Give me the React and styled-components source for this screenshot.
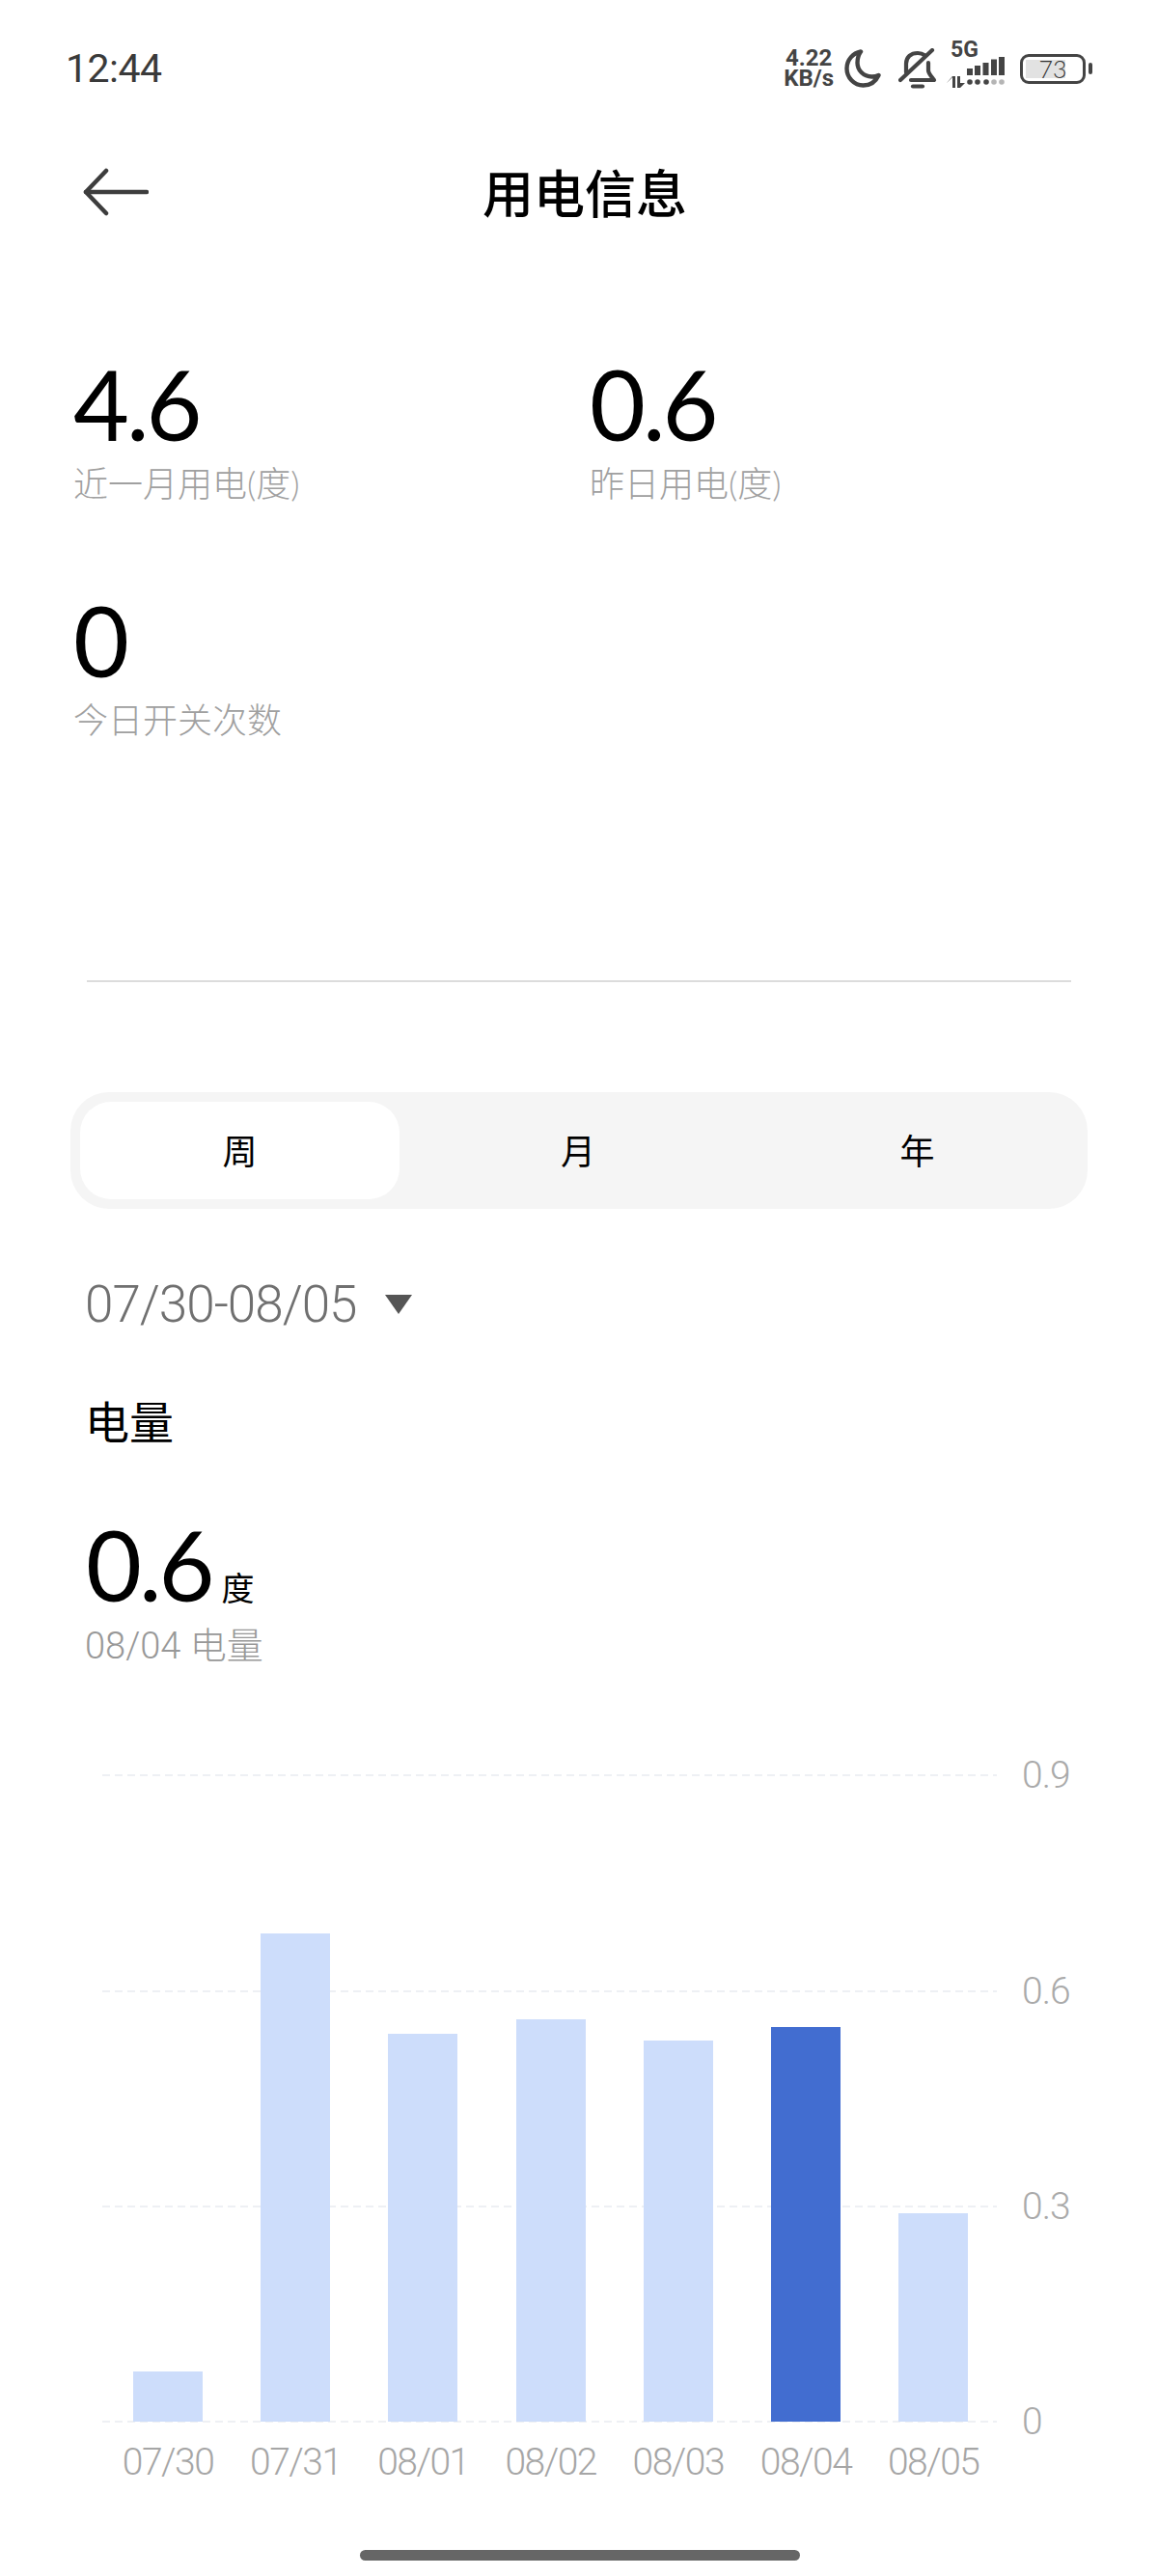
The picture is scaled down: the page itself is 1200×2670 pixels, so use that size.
import React from "react";
import styled, { createGlobalStyle } from "styled-components";

const GlobalStyle = createGlobalStyle`
  html, body {
    margin: 0;
    padding: 0;
    background: #fff;
  }
  body {
    font-family: Lato, "Noto Sans CJK SC", sans-serif;
  }
`;

//chart data, heights in px above the zero line
const bars = [
  { day: "07/30", height: 52 },
  { day: "07/31", height: 506 },
  { day: "08/01", height: 402 },
  { day: "08/02", height: 417 },
  { day: "08/03", height: 395 },
  { day: "08/04", height: 409, active: true },
  { day: "08/05", height: 216 },
];
const ticks = [
  { label: "0.9", top: 0 },
  { label: "0.6", top: 224 },
  { label: "0.3", top: 447 },
  { label: "0", top: 670 },
];

const MoonIcon = () => (
  <svg width="38" height="40" viewBox="0 0 38 40" fill="none">
    <path
      d="M17 2.500C9 4 2.500 11 2.500 20c0 9.500 7.500 17.500 17 17.500 7 0 13-4 16-10.500-2 1-4.500 1.500-7 1.500C19.500 28.500 13.500 21.500 13.500 14c0-4.500 1.300-8.500 3.500-11.500z"
      stroke="#444"
      strokeWidth="4.400"
      strokeLinejoin="round"
    />
  </svg>
);

const BellOffIcon = () => (
  <BellSvg width="40" height="42" viewBox="0 0 40 42" fill="none" stroke="#444" strokeWidth="4.200" strokeLinecap="round" strokeLinejoin="round">
    <path d="M8 25V16C8 9 13 5 20 5c3 0 5.500 1 7.500 2.500" />
    <path d="M31 15v8c0 3 3 6 6 10H13" />
    <path d="M2 33 35 2" />
    <path d="M15 39.500h10" />
  </BellSvg>
);

const SignalIcon = () => (
  <svg width="62" height="34" viewBox="0 0 62 34" fill="#444">
    <rect x="21" y="12" width="6" height="7" />
    <rect x="29" y="9" width="6" height="10" />
    <rect x="37.500" y="6" width="6" height="13" />
    <rect x="46" y="2.500" width="6" height="16.500" />
    <rect x="54" y="0" width="6" height="19" />
    <circle cx="24" cy="26" r="2.800" />
    <circle cx="32" cy="26" r="2.800" />
    <circle cx="41" cy="26" r="2.800" />
    <circle cx="49" cy="26" r="2.800" fill="#b5b5b5" />
    <circle cx="57" cy="26" r="2.800" fill="#b5b5b5" />
    <path d="M0 27l6-6v11h3V20H6zM11 20v12h3l5-5h-5v-7z" />
  </svg>
);

const BackArrow = () => (
  <svg width="68" height="50" viewBox="0 0 68 50" fill="none" stroke="#3d3d3d" strokeWidth="4.500" strokeLinecap="round" strokeLinejoin="round">
    <path d="M24 3 3 25l21 22" />
    <path d="M3 25h63" />
  </svg>
);

const App = () => {
  return (
    <Page>
      <GlobalStyle />
      <StatusBar>
        <Clock>12:44</Clock>
        <StatusIcons>
          <Speed>
            <span>4.22</span>
            <span>KB/s</span>
          </Speed>
          <MoonIcon />
          <BellOffIcon />
          <Network>
            <NetLabel>5G</NetLabel>
            <SignalIcon />
          </Network>
          <Battery>
            <BatteryFill />
            <BatteryLevel>73</BatteryLevel>
          </Battery>
        </StatusIcons>
      </StatusBar>

      <NavBar>
        <BackArrow />
        <Title>用电信息</Title>
      </NavBar>

      <Stats>
        <Stat>
          <BigNumber>4.6</BigNumber>
          <Caption>近一月用电(度)</Caption>
        </Stat>
        <Stat>
          <BigNumber>0.6</BigNumber>
          <Caption>昨日用电(度)</Caption>
        </Stat>
        <Stat>
          <BigNumber>0</BigNumber>
          <Caption>今日开关次数</Caption>
        </Stat>
      </Stats>

      <Divider />

      <Tabs>
        <Tab $active>周</Tab>
        <Tab>月</Tab>
        <Tab>年</Tab>
      </Tabs>

      <DateRow>
        <span>07/30-08/05</span>
        <Caret />
      </DateRow>

      <SectionTitle>电量</SectionTitle>

      <Reading>
        <BigNumber>0.6</BigNumber>
        <Unit>度</Unit>
      </Reading>
      <ReadingCaption>08/04 电量</ReadingCaption>

      <Chart>
        <Plot>
          {ticks.map((t) => (
            <TickRow key={t.label} $top={t.top}>
              <TickLine />
              <TickLabel>{t.label}</TickLabel>
            </TickRow>
          ))}
          <Columns>
            {bars.map((b) => (
              <Column key={b.day}>
                <Bar $height={b.height} $active={b.active} />
              </Column>
            ))}
          </Columns>
        </Plot>
        <Days>
          {bars.map((b) => (
            <Day key={b.day}>{b.day}</Day>
          ))}
        </Days>
      </Chart>

      <HomeBar />
    </Page>
  );
};

const Page = styled.div`
  width: 1200px;
  height: 2670px;
  overflow: hidden;
  background: #fff;
  display: flex;
  flex-direction: column;
`;
const StatusBar = styled.div`
  height: 142px;
  padding: 0 68px;
  display: flex;
  align-items: center;
  justify-content: space-between;
  box-sizing: border-box;
`;
const Clock = styled.div`
  font-family: Roboto, sans-serif;
  font-size: 41px;
  letter-spacing: -0.5px;
  color: #3a3a3a;
`;
const StatusIcons = styled.div`
  display: flex;
  align-items: center;
  gap: 14px;
  margin-right: 7px;
`;
const BellSvg = styled.svg`
  margin: 0 -4px 0 4px;
`;
const Speed = styled.div`
  display: flex;
  flex-direction: column;
  align-items: center;
  margin-right: -3px;
  font-family: Roboto, sans-serif;
  font-weight: 700;
  font-size: 24px;
  line-height: 21px;
  color: #444;
`;
const Network = styled.div`
  display: flex;
  flex-direction: column;
  align-items: flex-start;
  margin-top: -7px;
  svg {
    margin-top: -2px;
  }
`;
const NetLabel = styled.div`
  font-family: Roboto, sans-serif;
  font-weight: 700;
  font-size: 23px;
  line-height: 18px;
  color: #444;
  margin-left: 4px;
`;
const Battery = styled.div`
  position: relative;
  width: 68px;
  height: 31px;
  box-sizing: border-box;
  border: 3.5px solid #444;
  border-radius: 9px;
  display: flex;
  align-items: center;
  justify-content: center;
  &::after {
    content: "";
    position: absolute;
    right: -10px;
    top: 6px;
    width: 4px;
    height: 12px;
    border-radius: 2px;
    background: #444;
  }
`;
const BatteryFill = styled.div`
  position: absolute;
  left: 3px;
  top: 3px;
  bottom: 3px;
  width: 41px;
  background: #e2e2e2;
`;
const BatteryLevel = styled.span`
  position: relative;
  font-family: Lato, sans-serif;
  font-weight: 300;
  font-size: 25px;
  line-height: 1;
  color: #333;
`;
const NavBar = styled.div`
  height: 114px;
  padding-left: 86px;
  display: grid;
  grid-template-columns: 414px auto;
  align-items: center;
`;
const Title = styled.h1`
  margin: -2px 0 0;
  font-size: 53px;
  font-weight: 500;
  color: #000;
`;
const Stats = styled.div`
  margin-top: 112px;
  padding-left: 76px;
  display: grid;
  grid-template-columns: 535px 1fr;
  grid-auto-rows: 245px;
`;
const Stat = styled.div`
  display: flex;
  flex-direction: column;
`;
const BigNumber = styled.div`
  font-size: 100px;
  line-height: 100px;
  font-weight: 400;
  color: #000;
  letter-spacing: -3px;
`;
const Caption = styled.div`
  margin-top: 11px;
  font-size: 36px;
  line-height: 44px;
  font-weight: 300;
  color: #a0a0a0;
`;
const Divider = styled.div`
  height: 2px;
  margin: 158px 90px 0;
  background: #dcdcdc;
`;
const Tabs = styled.div`
  margin: 114px 73px 0;
  height: 121px;
  padding: 10px;
  box-sizing: border-box;
  border-radius: 40px;
  background: #f5f5f5;
  display: grid;
  grid-template-columns: 331px 370px 333px;
`;
const Tab = styled.div`
  display: flex;
  align-items: center;
  justify-content: center;
  padding-bottom: 3px;
  box-sizing: border-box;
  font-size: 36px;
  color: #000;
  border-radius: 32px;
  background: ${(p) => (p.$active ? "#fff" : "transparent")};
`;
const DateRow = styled.div`
  margin: 67px 0 0 88px;
  display: flex;
  align-items: center;
  gap: 29px;
  font-family: Roboto, sans-serif;
  font-size: 53px;
  letter-spacing: -1px;
  line-height: 64px;
  font-weight: 300;
  color: #707070;
`;
const Caret = styled.div`
  width: 0;
  height: 0;
  border-left: 14px solid transparent;
  border-right: 14px solid transparent;
  border-top: 20px solid #555;
`;
const SectionTitle = styled.h2`
  margin: 60px 0 0 88px;
  font-size: 46px;
  line-height: 60px;
  font-weight: 400;
  color: #000;
`;
const Reading = styled.div`
  margin: 67px 0 0 89px;
  display: flex;
  align-items: flex-end;
  gap: 10px;
`;
const Unit = styled.span`
  margin-bottom: 2px;
  font-size: 34px;
  line-height: 46px;
  color: #000;
`;
const ReadingCaption = styled.div`
  margin: 11px 0 0 88px;
  font-family: Roboto, "Noto Sans CJK SC", sans-serif;
  font-size: 38px;
  line-height: 48px;
  font-weight: 300;
  color: #989898;
`;
const Chart = styled.div`
  margin: 110px 0 0 108px;
`;
const Plot = styled.div`
  position: relative;
  height: 670px;
`;
const Columns = styled.div`
  position: relative;
  height: 100%;
  display: grid;
  grid-template-columns: repeat(7, 132.2px);
  align-items: end;
`;
const Column = styled.div`
  display: flex;
  justify-content: center;
`;
const Bar = styled.div`
  width: 72px;
  height: ${(p) => p.$height}px;
  background: ${(p) => (p.$active ? "#426dd0" : "#cdddfb")};
`;
const TickRow = styled.div`
  position: absolute;
  left: -2px;
  right: 0;
  top: ${(p) => p.$top}px;
  height: 0;
  display: flex;
  align-items: center;
`;
const TickLine = styled.div`
  width: 927px;
  height: 2px;
  background: repeating-linear-gradient(90deg, #eef0f4 0 8px, transparent 8px 13px);
`;
const TickLabel = styled.span`
  margin-left: 26px;
  font-family: Roboto, sans-serif;
  font-size: 39px;
  letter-spacing: -1px;
  font-weight: 300;
  color: #aaa;
`;
const Days = styled.div`
  margin-top: 18px;
  display: grid;
  grid-template-columns: repeat(7, 132.2px);
`;
const Day = styled.div`
  text-align: center;
  font-family: Roboto, sans-serif;
  font-size: 39px;
  letter-spacing: -1.500px;
  line-height: 48px;
  font-weight: 300;
  color: #a6a6a6;
`;
const HomeBar = styled.div`
  width: 456px;
  height: 11px;
  margin: 67px auto 0;
  transform: translateX(1px);
  border-radius: 6px;
  background: #666;
`;

export default App;
